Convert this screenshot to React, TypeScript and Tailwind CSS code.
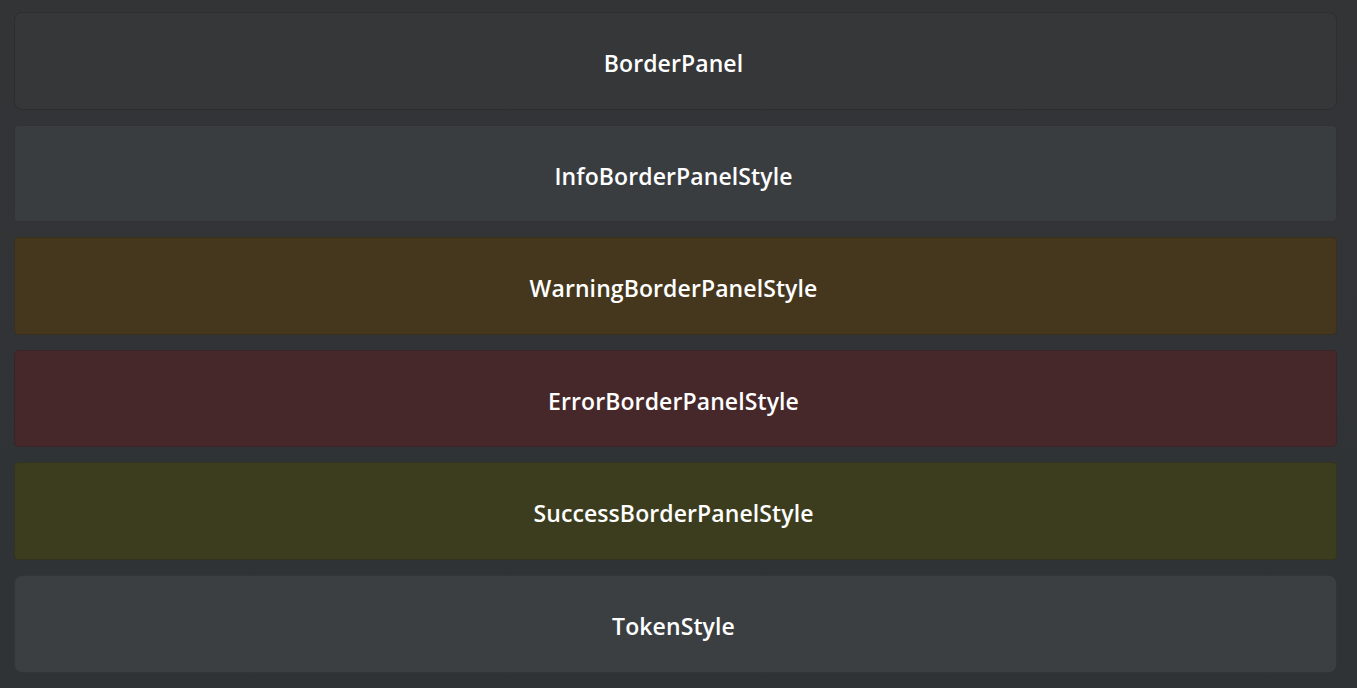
export default function App() {
  const panels = [
    { label: "BorderPanel", cls: "bg-[#363739] border-[#2d2e30] rounded-[8px]" },
    { label: "InfoBorderPanelStyle", cls: "bg-[#3a3d40] border-[#303235] rounded-[4px]" },
    { label: "WarningBorderPanelStyle", cls: "bg-[#45371d] border-[#3a2f1c] rounded-[4px]" },
    { label: "ErrorBorderPanelStyle", cls: "bg-[#46272a] border-[#3a2427] rounded-[4px]" },
    { label: "SuccessBorderPanelStyle", cls: "bg-[#3c3d1e] border-[#32341d] rounded-[4px]" },
    { label: "TokenStyle", cls: "bg-[#3c3f42] border-[#323538] rounded-[8px]" },
  ];
  return (
    <div
      className="w-[1357px] h-[688px] overflow-hidden bg-gradient-to-b from-[#333436] to-[#2f3336] pl-[14px] pr-[20px] pt-[12px] flex flex-col gap-[15px]"
      style={{ fontFamily: '"Open Sans", "Noto Sans", sans-serif' }}
    >
      {panels.map((p) => (
        <div
          key={p.label}
          className={`h-[97.6px] shrink-0 border flex items-center justify-center ${p.cls}`}
        >
          <span className="text-white text-[23px] font-semibold tracking-[0.1px] pt-[5px] -ml-[4px]">
            {p.label}
          </span>
        </div>
      ))}
    </div>
  );
}
